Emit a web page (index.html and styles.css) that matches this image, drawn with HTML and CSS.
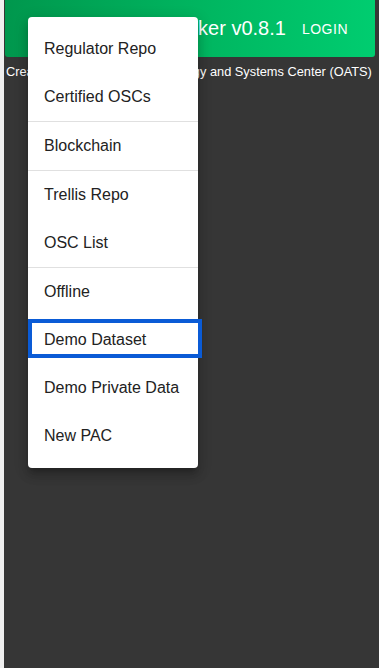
FILE: index.html
```html
<!DOCTYPE html>
<html lang="en">
<head>
<meta charset="utf-8">
<title>Tracker</title>
<link rel="stylesheet" href="styles.css">
</head>
<body>
<div class="app">
  <header class="topbar">
    <span class="title">Emissions Tracker v0.8.1</span>
    <span class="login">LOGIN</span>
  </header>
  <p class="credit">Created by Open Asset Technology and Systems Center (OATS)</p>

  <nav class="menu">
    <div class="item">Regulator Repo</div>
    <div class="item">Certified OSCs</div>
    <div class="divider"></div>
    <div class="item">Blockchain</div>
    <div class="divider"></div>
    <div class="item">Trellis Repo</div>
    <div class="item">OSC List</div>
    <div class="divider"></div>
    <div class="item">Offline</div>
    <div class="item focused">Demo Dataset</div>
    <div class="item">Demo Private Data</div>
    <div class="item">New PAC</div>
  </nav>
</div>
</body>
</html>
```

FILE: styles.css
```css
* { box-sizing: border-box; }
html, body { margin: 0; padding: 0; }
body {
  background: #efefef;
  font-family: "Liberation Sans", Arial, sans-serif;
}
.app {
  position: relative;
  margin-left: 4px;
  min-height: 668px;
  background: #363636;
  overflow: hidden;
}
.topbar {
  height: 57px;
  margin: 0 4px 0 1px;
  border-radius: 0 0 3px 3px;
  background: linear-gradient(90deg, #00974d 0%, #00b45f 50%, #00cd70 100%);
  color: #fff;
  display: flex;
  align-items: center;
  justify-content: flex-end;
  gap: 16px;
  padding-right: 27px;
}
.title {
  font-size: 20px;
  white-space: nowrap;
}
.login {
  font-size: 14px;
  letter-spacing: 0.5px;
}
.credit {
  margin: 0;
  padding: 6px 0 0 2px;
  height: 36px;
  line-height: 18px;
  font-size: 12.8px;
  color: #fff;
  white-space: nowrap;
  overflow: hidden;
}
.menu {
  position: absolute;
  left: 24px;
  top: 17px;
  width: 170px;
  padding: 8px 0;
  background: #fff;
  border-radius: 4px;
  box-shadow: 0 5px 5px -3px rgba(0,0,0,0.2), 0 8px 10px 1px rgba(0,0,0,0.14), 0 3px 14px 2px rgba(0,0,0,0.12);
}
.item {
  position: relative;
  height: 48px;
  display: flex;
  align-items: center;
  padding: 0 16px;
  font-size: 16px;
  color: #222;
  white-space: nowrap;
}
.divider {
  height: 1px;
  background: #e0e0e0;
}
.focused::after {
  content: "";
  position: absolute;
  left: 0;
  right: -4px;
  top: 3px;
  bottom: 6px;
  border: 4px solid #0a5bd6;
}
```
